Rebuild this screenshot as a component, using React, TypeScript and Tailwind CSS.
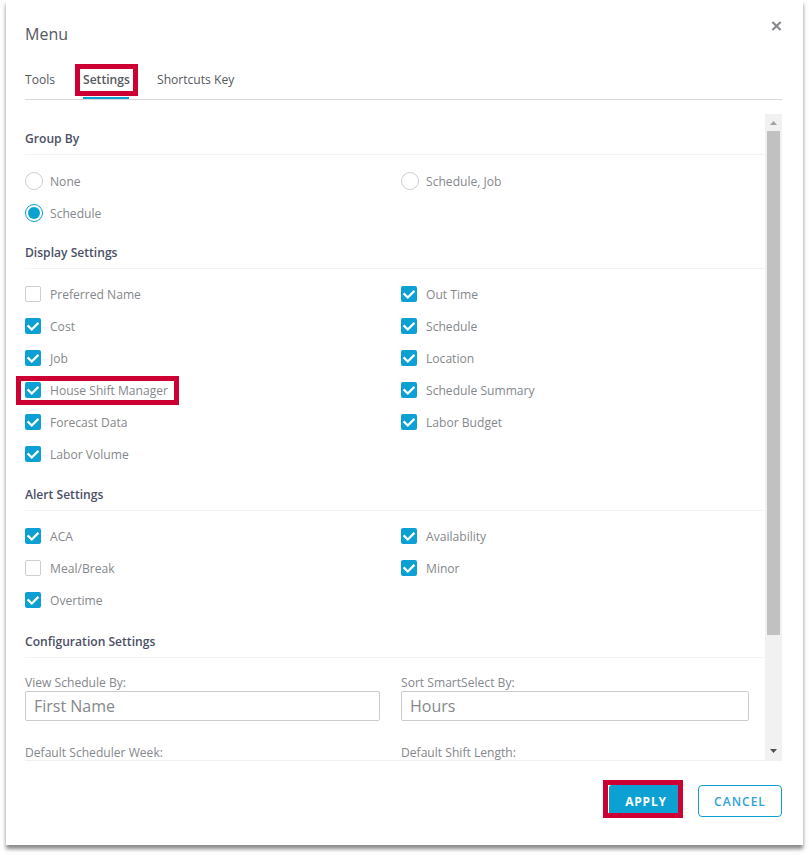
import type { ReactNode } from "react";

type Option = { label: string; checked?: boolean; highlighted?: boolean };

function Check({ checked }: { checked?: boolean }) {
  if (!checked) {
    return <span className="size-4 shrink-0 rounded-[2px] border border-[#cfcfcf] bg-white" />;
  }
  return (
    <span className="flex size-4 shrink-0 items-center justify-center rounded-[2px] bg-[#0ca1d2]">
      <svg width="16" height="16" viewBox="0 0 16 16" fill="none" stroke="#fff" strokeWidth="2.2">
        <path d="M2.6 7.4 6.8 11.5 13.4 4.9" />
      </svg>
    </span>
  );
}

function Radio({ checked }: { checked?: boolean }) {
  return (
    <span
      className={
        checked
          ? "flex size-[18px] shrink-0 items-center justify-center rounded-full border border-[#0ca1d2]"
          : "size-[18px] shrink-0 rounded-full border border-[#cfcfcf]"
      }
    >
      {checked && <span className="size-3 rounded-full bg-[#0ca1d2]" />}
    </span>
  );
}

function SectionTitle({ children }: { children: ReactNode }) {
  return (
    <h2 className="flex h-[33px] items-center border-b border-[#f3f3f3] pt-[3px] font-semibold text-[#4b4f66]">
      {children}
    </h2>
  );
}

function CheckRow({ label, checked, highlighted }: Option) {
  return (
    <label className="relative flex h-8 items-center gap-[9px]">
      <Check checked={checked} />
      <span className="pt-[3px]">{label}</span>
      {highlighted && (
        <span className="absolute top-0.5 -left-[9px] h-[29px] w-[163px] border-[5px] border-[#cc0033]" />
      )}
    </label>
  );
}

function RadioRow({ label, checked }: Option) {
  return (
    <label className="flex h-8 items-center gap-[7px]">
      <Radio checked={checked} />
      <span className="pt-[3px]">{label}</span>
    </label>
  );
}

function Columns({ left, right }: { left: ReactNode; right: ReactNode }) {
  return (
    <div className="flex">
      <div className="w-[376px]">{left}</div>
      <div className="flex-1">{right}</div>
    </div>
  );
}

function Field({ label, value }: { label: string; value: string }) {
  return (
    <div>
      <div className="h-[18px] pt-px leading-[18px]">{label}</div>
      <div className="flex h-[30px] items-center rounded-[2px] border border-[#cbcbcb] px-2 text-base">
        {value}
      </div>
    </div>
  );
}

const checks = (items: Option[]) => items.map((o) => <CheckRow key={o.label} {...o} />);

const displayLeft: Option[] = [
  { label: "Preferred Name" },
  { label: "Cost", checked: true },
  { label: "Job", checked: true },
  { label: "House Shift Manager", checked: true, highlighted: true },
  { label: "Forecast Data", checked: true },
  { label: "Labor Volume", checked: true },
];

const displayRight: Option[] = [
  { label: "Out Time", checked: true },
  { label: "Schedule", checked: true },
  { label: "Location", checked: true },
  { label: "Schedule Summary", checked: true },
  { label: "Labor Budget", checked: true },
];

const alertLeft: Option[] = [
  { label: "ACA", checked: true },
  { label: "Meal/Break" },
  { label: "Overtime", checked: true },
];

const alertRight: Option[] = [
  { label: "Availability", checked: true },
  { label: "Minor", checked: true },
];

export default function App() {
  return (
    <div className="h-[855px] w-[809px] overflow-hidden bg-white pl-1.5 font-['Open_Sans','Noto_Sans',sans-serif] text-[12.1px] text-[#85888c]">
      <div className="flex h-[845px] w-[797px] flex-col bg-white pr-[21px] pl-[19px] shadow-[0_4px_4px_rgba(70,74,74,0.65)]">
        <header className="flex h-[62px] shrink-0 justify-between">
          <h1 className="pt-[22px] text-base leading-6 text-[#55585e]">Menu</h1>
          <svg className="mt-[21px]" width="11" height="10" viewBox="0 0 11 10" stroke="#85888d" strokeWidth="2.2">
            <path d="M1.4 1 9.6 9M9.6 1 1.4 9" />
          </svg>
        </header>

        <nav className="flex h-[38px] shrink-0 border-b border-[#d9d9d9] text-[#55585e]">
          <span className="w-[58px] pt-2 leading-5">Tools</span>
          <span className="relative w-[46px] border-b-2 border-[#0ca1d2] pt-2 leading-5 font-semibold">
            Settings
            <span className="absolute top-0.5 -left-2 h-8 w-[63px] border-[5px] border-[#cc0033]" />
          </span>
          <span className="ml-7 pt-2 leading-5">Shortcuts Key</span>
        </nav>

        <main className="mt-3.5 flex h-[647px] shrink-0 border-b border-[#f0f0f0]">
          <div className="-ml-2.5 h-[646px] w-[750px] overflow-hidden pt-2 pl-2.5">
            <SectionTitle>Group By</SectionTitle>
            <div className="pt-2.5 pb-[7px]">
              <Columns
                left={
                  <>
                    <RadioRow label="None" />
                    <RadioRow label="Schedule" checked />
                  </>
                }
                right={<RadioRow label="Schedule, Job" />}
              />
            </div>
            <SectionTitle>Display Settings</SectionTitle>
            <div className="pt-[9px] pb-2">
              <Columns left={checks(displayLeft)} right={checks(displayRight)} />
            </div>
            <SectionTitle>Alert Settings</SectionTitle>
            <div className="pt-[9px] pb-[9px]">
              <Columns left={checks(alertLeft)} right={checks(alertRight)} />
            </div>
            <SectionTitle>Configuration Settings</SectionTitle>
            <div className="flex pt-[15px]">
              <div className="mr-[21px] flex w-[355px] flex-col gap-[22px]">
                <Field label="View Schedule By:" value="First Name" />
                <Field label="Default Scheduler Week:" value="" />
              </div>
              <div className="flex w-[348px] flex-col gap-[22px]">
                <Field label="Sort SmartSelect By:" value="Hours" />
                <Field label="Default Shift Length:" value="" />
              </div>
            </div>
          </div>
          <div className="flex w-[17px] shrink-0 flex-col items-center bg-[#f1f1f1]">
            <svg className="shrink-0" width="17" height="17" viewBox="0 0 17 17">
              <path d="M5 11h7L8.500 7z" fill="#a3a3a3" />
            </svg>
            <div className="h-[504px] w-[13px] bg-[#c1c1c1]" />
            <svg className="mt-auto shrink-0" width="17" height="17" viewBox="0 0 17 17">
              <path d="M5 6h7l-3.500 4z" fill="#505050" />
            </svg>
          </div>
        </main>

        <footer className="flex justify-end pt-[19px] text-xs font-semibold">
          <button className="mr-[15px] flex h-[38px] w-20 border-[5px] border-[#cc0033] bg-white pl-px font-bold tracking-[0.8px] text-white">
            <span className="flex h-full flex-1 items-center justify-center rounded-tl-[3px] bg-[#0ca1d2] pt-1.5 pl-[5px]">
              APPLY
            </span>
          </button>
          <button className="mt-[5px] flex h-8 w-[84px] items-center justify-center rounded-[4px] border border-[#0ca1d2] pt-0.5 tracking-[1px] text-[#2fa3d3]">
            CANCEL
          </button>
        </footer>
      </div>
    </div>
  );
}
